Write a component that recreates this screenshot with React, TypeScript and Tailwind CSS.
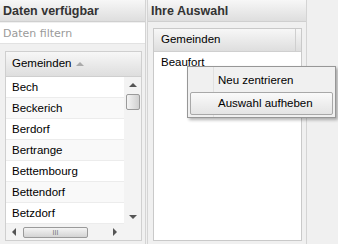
const items = ["Bech", "Beckerich", "Berdorf", "Bertrange", "Bettembourg", "Bettendorf", "Betzdorf"]

const head = "bg-gradient-to-b from-[#f7f7f7] to-[#dedede] border-b border-[#cfcfcf]"
const titleFont = { fontFamily: '"Liberation Sans", Tahoma, sans-serif', fontSize: 12.5 }

function Up() {
  return <div className="h-0 w-0 border-x-[4px] border-b-[4px] border-x-transparent border-b-[#555]" />
}
function Down() {
  return <div className="h-0 w-0 border-x-[4px] border-t-[4px] border-x-transparent border-t-[#555]" />
}

export default function App() {
  return (
    <div className="relative flex h-[244px] w-[338px] overflow-hidden bg-[#f0f0f0] text-[11px] text-black" style={{ fontFamily: '"Liberation Sans", Arial, sans-serif' }}>
      {/* left panel */}
      <div className="flex w-[146px] flex-col border-r border-[#d4d4d4]">
        <div className={`h-[22px] pl-[3px] leading-[22px] font-bold text-[#333] ${head}`} style={titleFont}>
          Daten verfügbar
        </div>
        <div className="mt-[1px] h-[21px] border-b border-[#e2e2e2] bg-white pl-[3px] leading-[21px] text-[#9a9a9a]" style={{ fontFamily: '"DejaVu Sans", Tahoma, sans-serif', fontSize: 11 }}>Daten filtern</div>
        <div className="flex flex-1 flex-col pb-[4px] pl-[5px] pr-[3px] pt-[7px]">
          <div className="flex flex-1 flex-col border border-[#cfcfcf] bg-white">
            <div className={`flex h-[25px] items-center gap-[5px] pl-[6px] ${head}`}>
              <span className="text-[11.5px]">Gemeinden</span>
              <div className="h-0 w-0 border-x-[4px] border-b-[4px] border-x-transparent border-b-[#aaa]" />
            </div>
            <div className="flex flex-1 overflow-hidden">
              <div className="flex-1 overflow-hidden">
                {items.map((n, i) => (
                  <div key={n} className={`h-[21px] border-b border-[#ececec] pl-[6px] text-[11.5px] leading-[21px] ${i % 2 ? "bg-[#f9f9f9]" : "bg-white"}`}>{n}</div>
                ))}
              </div>
              <div className="flex w-[17px] flex-col items-center bg-[#f3f3f3] pt-[6px]">
                <Up />
                <div className="mt-[7px] h-[16px] w-[14px] rounded-[2px] border border-[#9a9a9a] bg-gradient-to-r from-[#f4f4f4] to-[#d0d0d0]" />
                <div className="flex-1" />
                <div className="mb-[5px]"><Down /></div>
              </div>
            </div>
            <div className="flex h-[16px] items-center bg-[#f3f3f3]">
              <div className="ml-[6px] h-0 w-0 border-y-[4px] border-r-[4px] border-y-transparent border-r-[#555]" />
              <div className="ml-[7px] flex h-[11px] w-[65px] items-center justify-center rounded-[2px] border border-[#9a9a9a] bg-gradient-to-b from-[#f4f4f4] to-[#d4d4d4] text-[7px] leading-none text-[#777]">III</div>
              <div className="flex-1" />
              <div className="mr-[24px] h-0 w-0 border-y-[4px] border-l-[4px] border-y-transparent border-l-[#555]" />
            </div>
          </div>
        </div>
      </div>
      {/* right panel */}
      <div className="ml-[1px] flex w-[160px] flex-col border-x border-[#d4d4d4]">
        <div className={`h-[22px] pl-[3px] leading-[22px] font-bold text-[#333] ${head}`} style={titleFont}>
          Ihre Auswahl
        </div>
        <div className="flex flex-1 flex-col pb-[3px] pl-[5px] pr-[4px] pt-[6px]">
          <div className="flex flex-1 flex-col border border-[#c9c9c9] bg-white">
            <div className={`flex h-[23px] items-center ${head}`}>
              <span className="flex-1 pl-[7px] text-[11.5px]">Gemeinden</span>
              <div className="h-full w-[6px] border-l border-[#cfcfcf]" />
            </div>
            <div className="h-[21px] pl-[7px] text-[11.5px] leading-[21px]">Beaufort</div>
          </div>
        </div>
      </div>
      {/* context menu */}
      <div className="absolute left-[187px] top-[66px] flex h-[52px] w-[149px] flex-col border border-[#979797] bg-[#f0f0f0] shadow-[2px_2px_3px_rgba(0,0,0,0.3)]">
        <div className="absolute bottom-0 left-[25px] top-0 border-l border-[#e0e0e0]" />
        <div className="relative h-[25px] pl-[30px] text-[11.5px] leading-[26px]">Neu zentrieren</div>
        <div className="relative mx-[2px] h-[23px] rounded-[2px] border border-[#a8a8a8] bg-gradient-to-b from-[#fafafa] to-[#e4e4e4] pl-[27px] text-[11.5px] leading-[21px]">Auswahl aufheben</div>
      </div>
    </div>
  )
}
